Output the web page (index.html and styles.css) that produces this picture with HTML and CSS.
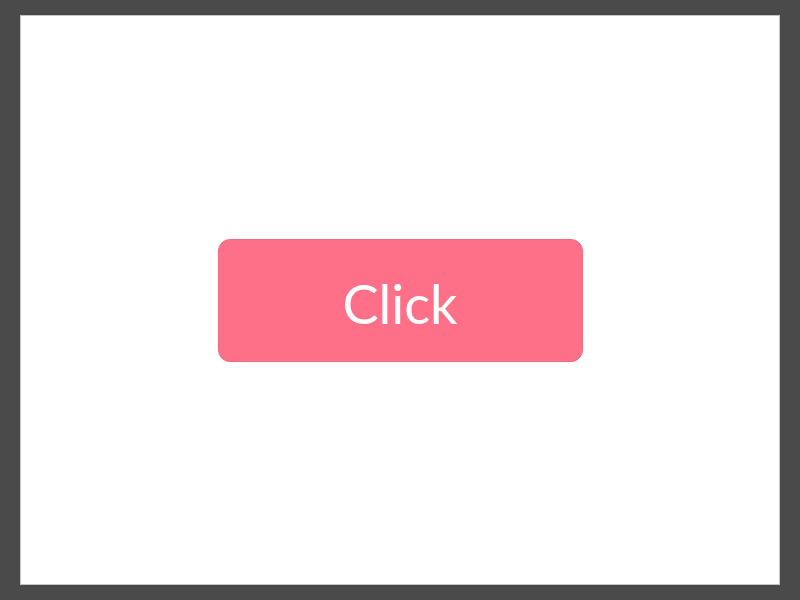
FILE: index.html
```html
<!DOCTYPE html>
<html>
<head>
<meta charset="utf-8">
<link rel="stylesheet" href="styles.css">
</head>
<body>
<div class="frame">
  <button class="btn">Click</button>
</div>
</body>
</html>
```
FILE: styles.css
```css
html, body {
  margin: 0;
  padding: 0;
  background: #4a4a4a;
  width: 800px;
  height: 600px;
  overflow: hidden;
}
.frame {
  box-sizing: border-box;
  margin: 15px 20px;
  width: 760px;
  height: 570px;
  background: #ffffff;
  border: 1px solid #c4c4c4;
  display: flex;
  align-items: center;
  justify-content: center;
}
.btn {
  box-sizing: border-box;
  width: 365px;
  height: 123px;
  background: #fe7088;
  border: 1px solid #f06a80;
  border-radius: 12px;
  color: #ffffff;
  font-family: "Lato", "Noto Sans", sans-serif;
  font-size: 54px;
  font-weight: 400;
  padding: 8px 0 0 0;
  margin: 0;
  line-height: 1;
}
```
